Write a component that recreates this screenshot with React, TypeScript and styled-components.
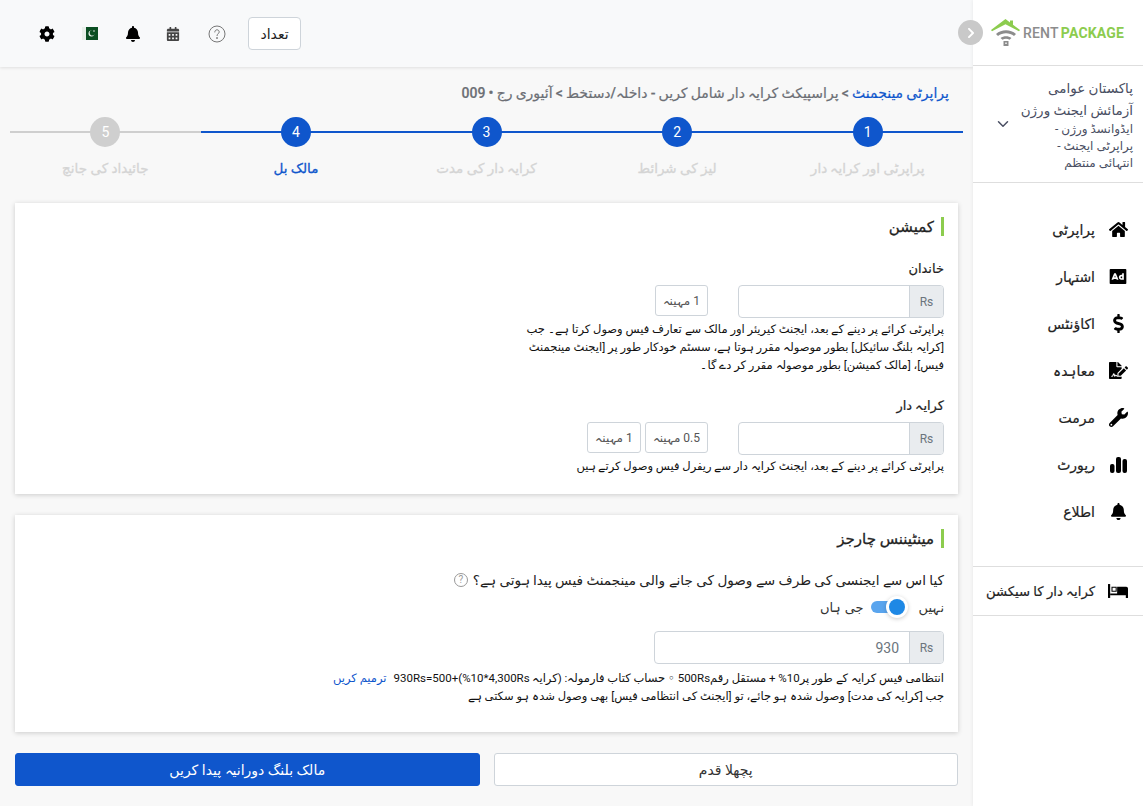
import React from 'react'
import styled, { createGlobalStyle } from 'styled-components'
import {
  FaBell,
  FaCalendarAlt,
  FaChevronRight,
  FaCog,
  FaDollarSign,
  FaFileSignature,
  FaHome,
  FaWrench,
} from 'react-icons/fa'
import { RiAdvertisementFill } from 'react-icons/ri'
import { FiChevronDown } from 'react-icons/fi'

const BLUE = '#0f56cc'
const GREEN = '#8ccc4e'

const GlobalStyle = createGlobalStyle`
  html, body {
    margin: 0;
    padding: 0;
    height: 100%;
    background: #f8f8f8;
  }
  body {
    font-family: Roboto, "Noto Sans", "DejaVu Sans", sans-serif;
    color: #212529;
    overflow: hidden;
  }
  * {
    box-sizing: border-box;
  }
`

const Page = styled.div`
  direction: rtl;
  display: flex;
  width: 1143px;
  height: 806px;
`

const Sidebar = styled.aside`
  position: relative;
  flex: none;
  width: 170px;
  background: #fff;
  box-shadow: -1px 0 3px rgba(0, 0, 0, 0.05);
`

const LogoRow = styled.div`
  direction: ltr;
  display: flex;
  align-items: center;
  height: 66px;
  padding-left: 18px;
  border-bottom: 1px solid #dedede;
`

const LogoText = styled.span`
  margin-left: 2px;
  font-size: 14px;
  font-weight: 500;
  letter-spacing: 0.2px;
  color: #8c8c8c;
  white-space: nowrap;

  b {
    margin-left: 2px;
    font-weight: 700;
    color: ${GREEN};
  }
`

const CollapseButton = styled.button`
  position: absolute;
  top: 20px;
  left: -15px;
  display: flex;
  align-items: center;
  justify-content: center;
  width: 25px;
  height: 25px;
  padding: 0;
  border: 0;
  border-radius: 50%;
  background: #c9c9c9;
  color: #fff;
  font-size: 12px;
`

const Workspace = styled.div`
  display: flex;
  align-items: center;
  justify-content: space-between;
  height: 117px;
  padding: 0 10px 0 21px;
  border-bottom: 1px solid #dedede;
  color: #4a4f63;
`

const WorkspaceText = styled.div`
  width: 120px;
`

const WorkspaceName = styled.div`
  font-size: 13.5px;
  line-height: 22px;
`

const WorkspacePlan = styled.div`
  width: 95px;
  font-size: 12px;
  line-height: 17px;
`

const MenuList = styled.nav`
  display: flex;
  flex-direction: column;
  padding-top: 23px;
`

const MenuItem = styled.div`
  display: flex;
  align-items: center;
  gap: 13px;
  height: 47px;
  padding-right: 15px;
  font-size: 14px;
  font-weight: 500;
  -webkit-text-stroke: 0.2px #222;
  white-space: nowrap;
  color: #222;
`

const MenuIcon = styled.span`
  display: flex;
  align-items: center;
  justify-content: center;
  flex: none;
  width: 20px;
  font-size: 19px;
  color: #000;
`

const TenantRow = styled(MenuItem)`
  height: 50px;
  margin-top: 31px;
  border-top: 1px solid #dedede;
  border-bottom: 1px solid #dedede;
  font-size: 13.2px;
`

const Main = styled.main`
  flex: 1;
  min-width: 0;
`

const Header = styled.header`
  direction: ltr;
  display: flex;
  align-items: center;
  height: 67px;
  padding-left: 26px;
  background: #f8f9fa;
  box-shadow: 0 1px 3px rgba(0, 0, 0, 0.1);
`

const HeaderSlot = styled.span<{ $width: number; $color?: string; $size?: number }>`
  display: flex;
  align-items: center;
  justify-content: center;
  width: ${({ $width }) => $width}px;
  color: ${({ $color }) => $color ?? '#000'};
  font-size: ${({ $size }) => $size ?? 16}px;
`

const CountButton = styled.button`
  width: 53px;
  height: 33px;
  margin-left: 7px;
  border: 1px solid #ced4da;
  border-radius: 4px;
  background: #fff;
  font: inherit;
  font-size: 14px;
  color: #222;
`

const Breadcrumb = styled.div`
  padding: 16px 24px 0 0;
  height: 50px;
  font-size: 14px;
  font-weight: 500;
  line-height: 20px;
  word-spacing: -0.3px;
  -webkit-text-stroke: 0.2px #6c6f75;
  color: #6c6f75;

  a {
    color: ${BLUE};
    -webkit-text-stroke: 0.2px ${BLUE};
  }
`

const Stepper = styled.ol`
  display: flex;
  margin: 0 10px 0 10px;
  padding: 0;
  list-style: none;
`

const Step = styled.li<{ $active: boolean }>`
  position: relative;
  display: flex;
  flex-direction: column;
  align-items: center;
  flex: 1;

  &::before {
    content: '';
    position: absolute;
    top: 14px;
    left: 0;
    right: 0;
    height: 2px;
    background: ${({ $active }) => ($active ? BLUE : '#cfcfcf')};
  }
`

const StepDot = styled.span<{ $active: boolean }>`
  position: relative;
  display: flex;
  align-items: center;
  justify-content: center;
  width: 30px;
  height: 30px;
  border-radius: 50%;
  background: ${({ $active }) => ($active ? BLUE : '#cfcfcf')};
  color: #fff;
  font-size: 14px;
`

const StepLabel = styled.span<{ $current: boolean }>`
  margin-top: 11px;
  font-size: 13.5px;
  font-weight: 500;
  line-height: 20px;
  -webkit-text-stroke: 0.3px ${({ $current }) => ($current ? BLUE : '#d4d4d4')};
  color: ${({ $current }) => ($current ? BLUE : '#d4d4d4')};
`

const Cards = styled.div`
  display: flex;
  flex-direction: column;
  gap: 21px;
  margin: 25px 15px 0;
`

const Card = styled.section<{ $height: number }>`
  height: ${({ $height }) => $height}px;
  padding: 14px;
  background: #fff;
  box-shadow: 0 1px 5px rgba(0, 0, 0, 0.18);
`

const CardTitle = styled.h2`
  display: flex;
  align-items: center;
  height: 19px;
  margin: 0;
  padding-right: 7px;
  border-right: 3px solid ${GREEN};
  font-size: 15px;
  font-weight: 500;
  -webkit-text-stroke: 0.3px #222;
  color: #222;
`

const FieldLabel = styled.div<{ $top: number }>`
  margin-top: ${({ $top }) => $top}px;
  margin-bottom: 6px;
  font-size: 13px;
  font-weight: 500;
  line-height: 20px;
  -webkit-text-stroke: 0.2px #222;
  color: #222;
`

const FieldRow = styled.div`
  display: flex;
  align-items: flex-start;
  gap: 30px;
`

const InputGroup = styled.div<{ $width: number }>`
  display: flex;
  width: ${({ $width }) => $width}px;
  height: 33px;
  border: 1px solid #ced4da;
  border-radius: 4px;
  overflow: hidden;
  background: #fff;
`

const Addon = styled.span`
  display: flex;
  align-items: center;
  justify-content: center;
  flex: none;
  width: 34px;
  background: #e9ecef;
  border-left: 1px solid #ced4da;
  font-size: 12px;
  color: #6c757d;
`

const TextInput = styled.input`
  flex: 1;
  min-width: 0;
  padding: 0 10px;
  border: 0;
  outline: 0;
  background: transparent;
  font: inherit;
  font-size: 14px;
  color: #6c757d;
`

const Chips = styled.div`
  display: flex;
  gap: 4px;
`

const Chip = styled.button`
  height: 31px;
  padding: 0 7px;
  border: 1px solid #ced4da;
  border-radius: 3px;
  background: #fff;
  font: inherit;
  font-size: 12px;
  color: #555;
`

const Hint = styled.p<{ $width?: number }>`
  margin: 2px 0 0;
  width: ${({ $width }) => ($width ? `${$width}px` : 'auto')};
  font-size: 11.5px;
  line-height: 18px;
  color: #111;
`

const Question = styled.div`
  display: flex;
  align-items: center;
  gap: 5px;
  margin-top: 22px;
  font-size: 13.6px;
  line-height: 20px;
  color: #222;
`

const HelpDot = styled.span`
  display: inline-flex;
  align-items: center;
  justify-content: center;
  width: 14px;
  height: 14px;
  border: 1px solid #999;
  border-radius: 50%;
  font-size: 10px;
  color: #999;
`

const ToggleRow = styled.div`
  display: flex;
  align-items: center;
  margin: 7px 0 14px;
  height: 20px;
  font-size: 13px;
  color: #333;
`

const Toggle = styled.span`
  position: relative;
  display: block;
  width: 29px;
  height: 12px;
  margin: 0 19px 0 7px;
  border-radius: 6px;
  background: #5aa5ee;

  &::after {
    content: '';
    position: absolute;
    top: -2px;
    right: -5px;
    width: 16px;
    height: 16px;
    border-radius: 50%;
    background: #1e88e5;
    box-shadow: 0 0 0 3px #fff, 0 1px 4px 3px rgba(0, 0, 0, 0.2);
  }
`

const HintLine = styled.div`
  display: flex;
  justify-content: space-between;
  margin-top: 5px;
  width: 611px;
  font-size: 11.5px;
  line-height: 18px;
  white-space: nowrap;
  color: #111;

  a {
    color: ${BLUE};
  }
`

const Hint2 = styled.div`
  font-size: 11.5px;
  line-height: 18px;
  color: #111;
`

const Actions = styled.div`
  display: flex;
  gap: 14px;
  margin: 21px 15px 0;
`

const ActionButton = styled.button<{ $primary?: boolean }>`
  flex: 1;
  height: 33px;
  border: 1px solid ${({ $primary }) => ($primary ? BLUE : '#ced4da')};
  border-radius: 3px;
  background: ${({ $primary }) => ($primary ? BLUE : '#fff')};
  color: ${({ $primary }) => ($primary ? '#fff' : '#333')};
  font: inherit;
  font-size: 14px;
`

const HouseLogo = () => (
  <svg width="30" height="27" viewBox="0 0 30 27">
    <path d="M0 11 14.5 0 19 3.4V1.6h3v4.2L29 11l-1 1.2-13.5-7L1 12.2z" fill={GREEN} />
    <path d="M5 15c5.5-5 14.5-5 20 0l-2 2c-4.500-3.800-11.500-3.800-16 0z" fill="#8c8c8c" />
    <path d="M9.500 19c3-2.500 8-2.500 11 0l-2 1.800c-2-1.400-5-1.400-7 0z" fill="#8c8c8c" />
    <path d="M12.500 22h5v5h-5z" fill="#8c8c8c" />
    <path d="M14.300 23.600h1.400V25h-1.400z" fill="#fff" />
  </svg>
)

const PakistanFlag = () => (
  <svg width="16" height="13" viewBox="0 0 16 13">
    <rect width="16" height="13" fill="#0b4f22" />
    <rect width="4" height="13" fill="#e8efe9" />
    <circle cx="9.500" cy="6.500" r="3" fill="#e8efe9" />
    <circle cx="10.500" cy="5.700" r="2.800" fill="#0b4f22" />
    <circle cx="12" cy="4" r="0.800" fill="#e8efe9" />
  </svg>
)

const QuestionIcon = () => (
  <svg width="18" height="18" viewBox="0 0 18 18" fill="none" stroke="#777" strokeWidth="1">
    <circle cx="9" cy="9" r="8" />
    <path d="M6.800 7c0-1.300 1-2.200 2.200-2.200s2.200.9 2.200 2.100c0 1.800-2.200 1.800-2.200 3.700" strokeLinecap="round" />
    <circle cx="9" cy="13" r="0.500" fill="#777" />
  </svg>
)

const BarsIcon = () => (
  <svg width="17" height="16" viewBox="0 0 17 16" fill="#000">
    <rect x="0" y="7" width="4.500" height="9" rx="2" />
    <rect x="6" y="0" width="5" height="16" rx="2" />
    <rect x="12.500" y="2" width="4.500" height="14" rx="2" />
  </svg>
)

const BedIcon = () => (
  <svg width="23" height="16" viewBox="0 0 23 16" fill="#000">
    <rect x="0" y="0" width="2.500" height="16" />
    <path d="M4 3h6v6H4zM5.200 4.200v3.600h3.600V4.200z" fillRule="evenodd" />
    <path d="M10.500 3H21a2 2 0 0 1 2 2v11h-2.500v-3h-18v-2h8z" />
  </svg>
)

const menu = [
  { label: 'پراپرٹی', icon: <FaHome /> },
  { label: 'اشتہار', icon: <RiAdvertisementFill size={23} /> },
  { label: 'اکاؤنٹس', icon: <FaDollarSign /> },
  { label: 'معاہدہ', icon: <FaFileSignature /> },
  { label: 'مرمت', icon: <FaWrench /> },
  { label: 'رپورٹ', icon: <BarsIcon /> },
  { label: 'اطلاع', icon: <FaBell size={17} /> },
]

const steps = ['پراپرٹی اور کرایہ دار', 'لیز کی شرائط', 'کرایہ دار کی مدت', 'مالک بل', 'جائیداد کی جانچ']

const CURRENT_STEP = 3

// RLM marks keep the formula's pieces in right-to-left order
const FORMULA = '(کرایہ 4,300Rs\u200f*\u200f10\u200f%)\u200f+\u200f500\u200f=\u200f930Rs'

export default function App() {
  return (
    <Page>
      <GlobalStyle />
      <Sidebar>
        <LogoRow>
          <HouseLogo />
          <LogoText>
            RENT<b>PACKAGE</b>
          </LogoText>
        </LogoRow>
        <CollapseButton>
          <FaChevronRight />
        </CollapseButton>
        <Workspace>
          <WorkspaceText>
            <WorkspaceName>پاکستان عوامی آزمائش ایجنٹ ورژن</WorkspaceName>
            <WorkspacePlan>ایڈوانسڈ ورژن - پراپرٹی ایجنٹ - انتہائی منتظم</WorkspacePlan>
          </WorkspaceText>
          <FiChevronDown size={18} />
        </Workspace>
        <MenuList>
          {menu.map((item) => (
            <MenuItem key={item.label}>
              <MenuIcon>{item.icon}</MenuIcon>
              {item.label}
            </MenuItem>
          ))}
          <TenantRow>
            <MenuIcon>
              <BedIcon />
            </MenuIcon>
            کرایہ دار کا سیکشن
          </TenantRow>
        </MenuList>
      </Sidebar>
      <Main>
        <Header>
          <HeaderSlot $width={42}>
            <FaCog />
          </HeaderSlot>
          <HeaderSlot $width={44}>
            <PakistanFlag />
          </HeaderSlot>
          <HeaderSlot $width={41}>
            <FaBell />
          </HeaderSlot>
          <HeaderSlot $width={40} $color="#444" $size={14}>
            <FaCalendarAlt />
          </HeaderSlot>
          <HeaderSlot $width={48}>
            <QuestionIcon />
          </HeaderSlot>
          <CountButton>تعداد</CountButton>
        </Header>
        <Breadcrumb>
          <a>پراپرٹی مینجمنٹ</a> &gt; پراسپیکٹ کرایہ دار شامل کریں - داخلہ/دستخط &gt; آئیوری رج • 009
        </Breadcrumb>
        <Stepper>
          {steps.map((label, i) => (
            <Step key={label} $active={i <= CURRENT_STEP}>
              <StepDot $active={i <= CURRENT_STEP}>{i + 1}</StepDot>
              <StepLabel $current={i === CURRENT_STEP}>{label}</StepLabel>
            </Step>
          ))}
        </Stepper>
        <Cards>
          <Card $height={291}>
            <CardTitle>کمیشن</CardTitle>
            <FieldLabel $top={23}>خاندان</FieldLabel>
            <FieldRow>
              <InputGroup $width={206}>
                <Addon>Rs</Addon>
                <TextInput />
              </InputGroup>
              <Chips>
                <Chip>1 مہینہ</Chip>
              </Chips>
            </FieldRow>
            <Hint $width={425}>
              پراپرٹی کرائے پر دینے کے بعد، ایجنٹ کیریئر اور مالک سے تعارف فیس وصول کرتا ہے۔ جب [کرایہ بلنگ سائیکل] بطور
              موصولہ مقرر ہوتا ہے، سسٹم خودکار طور پر [ایجنٹ مینجمنٹ فیس]، [مالک کمیشن] بطور موصولہ مقرر کر دے گا۔
            </Hint>
            <FieldLabel $top={22}>کرایہ دار</FieldLabel>
            <FieldRow>
              <InputGroup $width={206}>
                <Addon>Rs</Addon>
                <TextInput />
              </InputGroup>
              <Chips>
                <Chip>0.5 مہینہ</Chip>
                <Chip>1 مہینہ</Chip>
              </Chips>
            </FieldRow>
            <Hint>پراپرٹی کرائے پر دینے کے بعد، ایجنٹ کرایہ دار سے ریفرل فیس وصول کرتے ہیں</Hint>
          </Card>
          <Card $height={217}>
            <CardTitle>مینٹیننس چارجز</CardTitle>
            <Question>
              کیا اس سے ایجنسی کی طرف سے وصول کی جانے والی مینجمنٹ فیس پیدا ہوتی ہے؟
              <HelpDot>?</HelpDot>
            </Question>
            <ToggleRow>
              نہیں
              <Toggle />
              جی ہاں
            </ToggleRow>
            <InputGroup $width={290}>
              <Addon>Rs</Addon>
              <TextInput defaultValue="930" />
            </InputGroup>
            <HintLine>
              <span>انتظامی فیس کرایہ کے طور پر10% + مستقل رقم500Rs ◦ حساب کتاب فارمولہ: {FORMULA}</span>
              <a>ترمیم کریں</a>
            </HintLine>
            <Hint2>جب [کرایہ کی مدت] وصول شدہ ہو جائے، تو [ایجنٹ کی انتظامی فیس] بھی وصول شدہ ہو سکتی ہے</Hint2>
          </Card>
        </Cards>
        <Actions>
          <ActionButton>پچھلا قدم</ActionButton>
          <ActionButton $primary>مالک بلنگ دورانیہ پیدا کریں</ActionButton>
        </Actions>
      </Main>
    </Page>
  )
}
